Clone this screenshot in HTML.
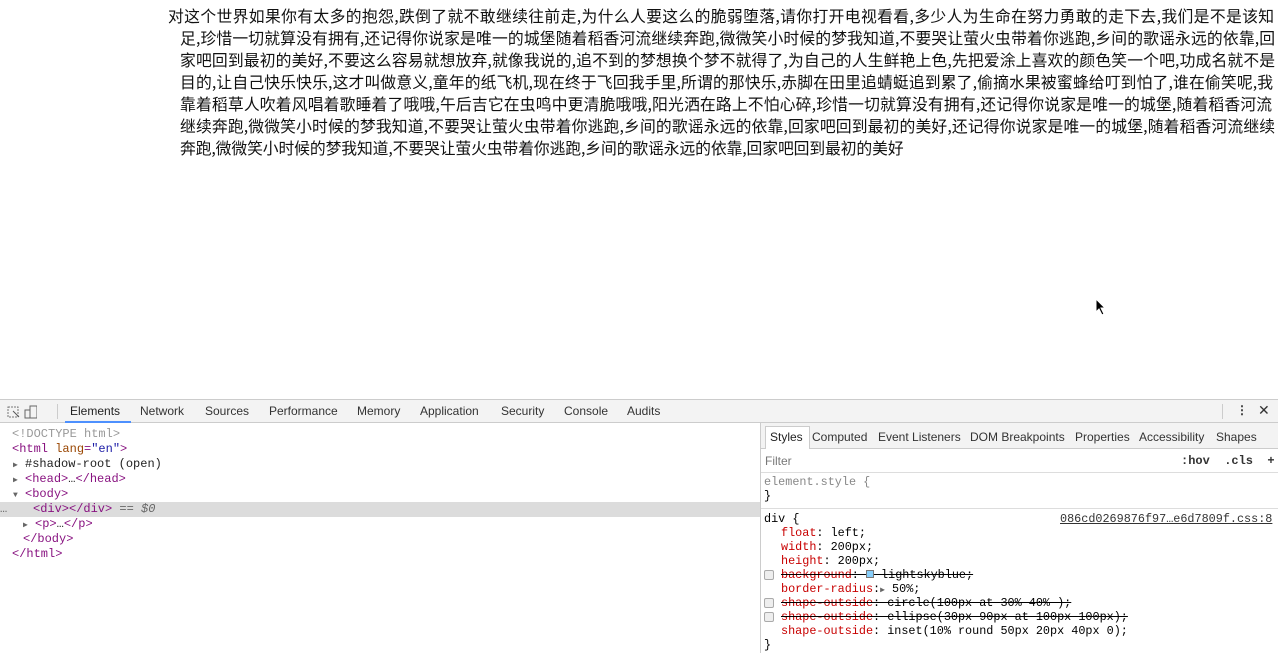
<!DOCTYPE html>
<html><head><meta charset="utf-8"><style>
*{margin:0;padding:0;box-sizing:border-box}
body{width:1278px;height:651px;overflow:hidden;background:#fff;position:relative;font-family:"Liberation Sans","Noto Sans CJK SC",sans-serif}
.t{position:absolute;font-size:15.8px;letter-spacing:-0.1px;line-height:22px;color:#111;white-space:nowrap;text-align:justify;text-align-last:justify;font-family:"Noto Sans CJK SC","Liberation Sans",sans-serif}
.dt{position:absolute;left:0;top:399px;width:1278px;height:252px;border-top:1px solid #ccc;background:#fff}
.tb{position:absolute;left:0;top:0;width:1278px;height:23px;background:#f3f3f3;border-bottom:1px solid #ccc;font-size:12px;color:#333}
.tb span{position:absolute;top:4px}
.mono{font-family:"Liberation Mono","DejaVu Sans Mono",monospace;font-size:12px;position:absolute;white-space:pre}
.rp{font-size:11.8px}
.r{color:#c80000}.p{color:#881280}.a{color:#994500}.v{color:#1a1aa6}.g{color:#999}
.cb{position:absolute;left:764px;width:10px;height:10px;border:1px solid #aaa;background:#eee;border-radius:2px}
</style></head><body>
<div class="t" style="left:168px;top:5px;width:1106px">对这个世界如果你有太多的抱怨,跌倒了就不敢继续往前走,为什么人要这么的脆弱堕落,请你打开电视看看,多少人为生命在努力勇敢的走下去,我们是不是该知</div>
<div class="t" style="left:180px;top:27px;width:1095px">足,珍惜一切就算没有拥有,还记得你说家是唯一的城堡随着稻香河流继续奔跑,微微笑小时候的梦我知道,不要哭让萤火虫带着你逃跑,乡间的歌谣永远的依靠,回</div>
<div class="t" style="left:180px;top:49px;width:1095px">家吧回到最初的美好,不要这么容易就想放弃,就像我说的,追不到的梦想换个梦不就得了,为自己的人生鲜艳上色,先把爱涂上喜欢的颜色笑一个吧,功成名就不是</div>
<div class="t" style="left:180px;top:71px;width:1093px">目的,让自己快乐快乐,这才叫做意义,童年的纸飞机,现在终于飞回我手里,所谓的那快乐,赤脚在田里追蜻蜓追到累了,偷摘水果被蜜蜂给叮到怕了,谁在偷笑呢,我</div>
<div class="t" style="left:180px;top:93px;width:1092px">靠着稻草人吹着风唱着歌睡着了哦哦,午后吉它在虫鸣中更清脆哦哦,阳光洒在路上不怕心碎,珍惜一切就算没有拥有,还记得你说家是唯一的城堡,随着稻香河流</div>
<div class="t" style="left:180px;top:115px;width:1095px">继续奔跑,微微笑小时候的梦我知道,不要哭让萤火虫带着你逃跑,乡间的歌谣永远的依靠,回家吧回到最初的美好,还记得你说家是唯一的城堡,随着稻香河流继续</div>
<div class="t" style="left:180px;top:137px;text-align:left;text-align-last:left">奔跑,微微笑小时候的梦我知道,不要哭让萤火虫带着你逃跑,乡间的歌谣永远的依靠,回家吧回到最初的美好</div>
<svg style="position:absolute;left:1095px;top:298px" width="12" height="18" viewBox="0 0 12 18"><path d="M1 1 L1 14 L4 11 L7 17 L9 16 L6 10 L10 10 Z" fill="#000" stroke="#fff" stroke-width="1"/></svg>
<div class="dt">
<div class="tb">
<svg style="position:absolute;left:7px;top:5px" width="30" height="14"><rect x="1" y="2" width="10" height="10" fill="none" stroke="#777" stroke-dasharray="2 1"/><path d="M6 6 L12 12" stroke="#555"/><rect x="23" y="1" width="7" height="12" fill="none" stroke="#666"/><rect x="18" y="5" width="5" height="8" fill="none" stroke="#666"/></svg>
<div style="position:absolute;left:57px;top:4px;width:1px;height:15px;background:#ccc"></div>
<span style="left:70px;color:#222">Elements</span>
<div style="position:absolute;left:65px;top:21px;width:66px;height:2px;background:#4d90fe"></div>
<span style="left:140px">Network</span><span style="left:205px">Sources</span><span style="left:269px">Performance</span><span style="left:357px">Memory</span><span style="left:420px">Application</span><span style="left:501px">Security</span><span style="left:564px">Console</span><span style="left:627px">Audits</span>
<div style="position:absolute;left:1222px;top:4px;width:1px;height:15px;background:#ccc"></div>
<span style="left:1236px;font-weight:bold;line-height:10px;top:5px">⋮</span><span style="left:1258px;font-size:14px;top:2px">✕</span>
</div>
<div style="position:absolute;left:0;top:102px;width:760px;height:15px;background:#dcdcdc"></div>
<div class="mono g" style="left:12px;top:27px">&lt;!DOCTYPE html&gt;</div>
<div class="mono" style="left:12px;top:42px"><span class="p">&lt;html</span> <span class="a">lang</span><span class="p">=</span><span class="v">"en"</span><span class="p">&gt;</span></div>
<div class="mono" style="left:13px;top:57px;color:#222"><span style="font-size:8px;color:#666">▶</span> #shadow-root (open)</div>
<div class="mono p" style="left:13px;top:72px"><span style="font-size:8px;color:#666">▶</span> &lt;head&gt;<span style="color:#222">…</span>&lt;/head&gt;</div>
<div class="mono p" style="left:13px;top:87px"><span style="font-size:8px;color:#666">▼</span> &lt;body&gt;</div>
<div class="mono" style="left:0px;top:102px;color:#666">…</div>
<div class="mono" style="left:33px;top:102px;color:#666"><span class="p">&lt;div&gt;&lt;/div&gt;</span> == <i>$0</i></div>
<div class="mono p" style="left:23px;top:117px"><span style="font-size:8px;color:#666">▶</span> &lt;p&gt;<span style="color:#222">…</span>&lt;/p&gt;</div>
<div class="mono p" style="left:23px;top:132px">&lt;/body&gt;</div>
<div class="mono p" style="left:12px;top:147px">&lt;/html&gt;</div>
<div style="position:absolute;left:760px;top:23px;width:1px;height:230px;background:#ccc"></div>
<div style="position:absolute;left:761px;top:23px;width:517px;height:26px;background:#f3f3f3;border-bottom:1px solid #ccc;font-size:12px;color:#333">
<span style="position:absolute;left:4px;top:3px;height:23px;width:45px;background:#fff;border:1px solid #ccc;border-bottom:none"></span>
<span style="position:absolute;left:9px;top:7px;color:#222">Styles</span><span style="position:absolute;left:51px;top:7px">Computed</span><span style="position:absolute;left:117px;top:7px">Event Listeners</span><span style="position:absolute;left:209px;top:7px">DOM Breakpoints</span><span style="position:absolute;left:314px;top:7px">Properties</span><span style="position:absolute;left:378px;top:7px">Accessibility</span><span style="position:absolute;left:455px;top:7px">Shapes</span>
</div>
<div style="position:absolute;left:761px;top:50px;width:517px;height:23px;border-bottom:1px solid #ddd;font-size:12px">
<span style="position:absolute;left:4px;top:4px;color:#777">Filter</span>
<span class="mono" style="left:420px;top:4px;font-weight:bold;color:#333">:hov  .cls  +</span>
</div>
<div class="mono rp" style="left:764px;top:75px;color:#888">element.style {</div>
<div class="mono rp" style="left:764px;top:89px">}</div>
<div style="position:absolute;left:761px;top:108px;width:517px;height:1px;background:#ddd"></div>
<div class="mono rp" style="left:764px;top:112px">div {</div>
<div class="mono rp" style="left:1060px;top:112px;text-decoration:underline;color:#333">086cd0269876f97…e6d7809f.css:8</div>
<div class="mono rp" style="left:781px;top:126px"><span class="r">float</span>: left;</div>
<div class="mono rp" style="left:781px;top:140px"><span class="r">width</span>: 200px;</div>
<div class="mono rp" style="left:781px;top:154px"><span class="r">height</span>: 200px;</div>
<div class="cb" style="top:170px"></div>
<div class="mono rp" style="left:781px;top:168px;text-decoration:line-through"><span class="r">background</span>: <span style="display:inline-block;width:8px;height:8px;background:lightskyblue;border:1px solid #777"></span> lightskyblue;</div>
<div class="mono rp" style="left:781px;top:182px"><span class="r">border-radius</span>:<span style="font-size:8px;color:#666">▶</span> 50%;</div>
<div class="cb" style="top:198px"></div>
<div class="mono rp" style="left:781px;top:196px;text-decoration:line-through"><span class="r">shape-outside</span>: circle(100px at 30% 40% );</div>
<div class="cb" style="top:212px"></div>
<div class="mono rp" style="left:781px;top:210px;text-decoration:line-through"><span class="r">shape-outside</span>: ellipse(30px 90px at 100px 100px);</div>
<div class="mono rp" style="left:781px;top:224px"><span class="r">shape-outside</span>: inset(10% round 50px 20px 40px 0);</div>
<div class="mono rp" style="left:764px;top:238px">}</div>
</div>
</body></html>
